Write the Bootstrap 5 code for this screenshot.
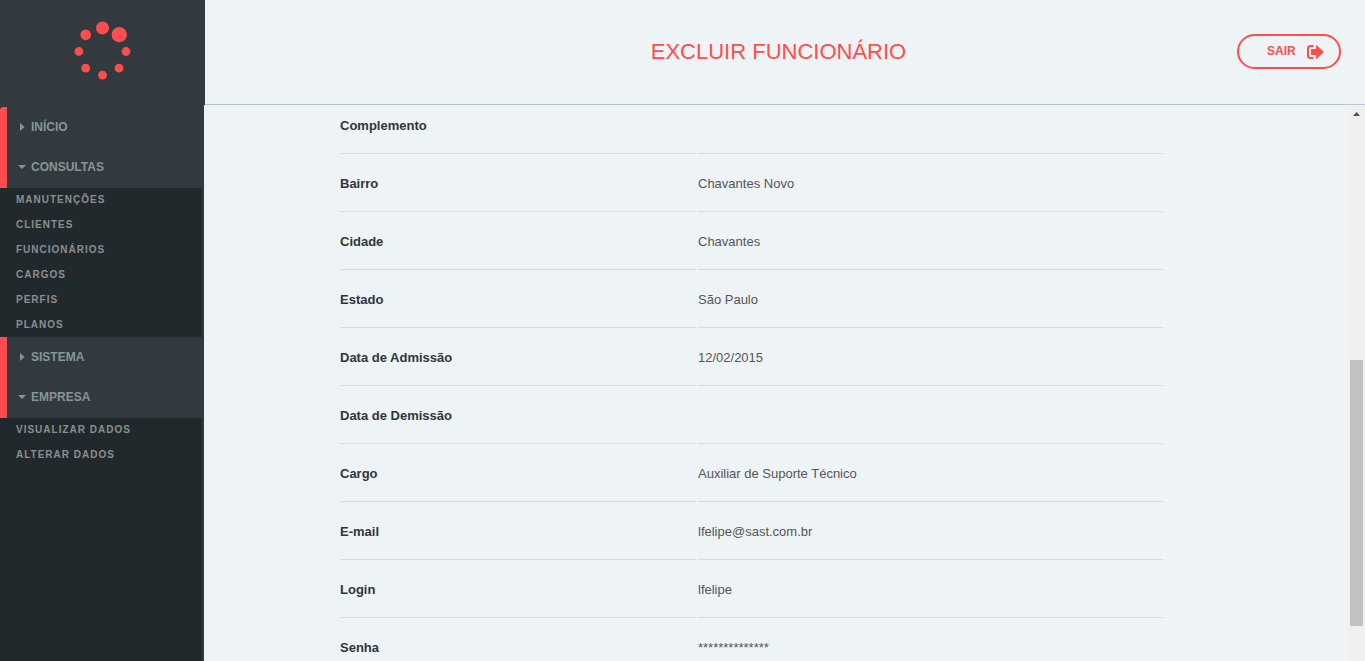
<!DOCTYPE html>
<html lang="pt-BR">
<head>
<meta charset="utf-8">
<meta name="viewport" content="width=device-width, initial-scale=1">
<title>Excluir Funcionário</title>
<link href="https://cdn.jsdelivr.net/npm/bootstrap@5.3.0/dist/css/bootstrap.min.css" rel="stylesheet">
<style>
  :root { --accent: #ff4d4d; --slate: #323a40; --ink: #22292c; --page: #eef3f6; }
  body { font-family: "Liberation Sans", Arial, sans-serif; font-size: 13px; background: var(--page); color: #555; }
  a { text-decoration: none; }

  /* top bar */
  .brand { width: 205px; height: 105px; padding-bottom: 2px; background: var(--slate); }
  .topbar { display: grid; grid-template-columns: 1fr auto 1fr; padding: 0 24px 1px 11px; border-bottom: 1px solid #b8c4d0; }
  .page-title { font-size: 22px; line-height: 27px; color: var(--accent); font-weight: 400; }
  .btn-exit { --bs-btn-color: var(--accent); --bs-btn-border-color: var(--accent); --bs-btn-hover-color: #fff; --bs-btn-hover-bg: var(--accent);
    --bs-btn-font-size: 12px; --bs-btn-font-weight: 700; --bs-btn-line-height: 19px; --bs-btn-border-width: 2px;
    --bs-btn-padding-y: 6px; --bs-btn-padding-x: 0; width: 104px; height: 35px; padding-left: 28px; gap: 11px; justify-self: end; }

  /* side menu */
  .side { width: 204px; background: var(--ink); border-top: 2px solid var(--slate); border-right: 2px solid var(--slate); }
  .menu-group { background: var(--slate); border-left: 7px solid var(--accent); padding-bottom: 1px; }
  .menu-group.first { border-top-left-radius: 3px; }
  .menu-group a { height: 40px; padding-left: 11px; gap: 5px; font-size: 12px; font-weight: 700; color: #869696; }
  .menu-group svg { fill: #968f8f; }
  .submenu { gap: 1px; }
  .submenu a { display: block; padding: 0 0 1px 16px; font-size: 10px; line-height: 23px; font-weight: 700; letter-spacing: 1px; color: #8a8f8f; }

  /* record sheet */
  .sheet { display: grid; grid-template-columns: 134fr 827fr 183fr; }
  .record { grid-column: 2; width: 100%; align-self: start; table-layout: fixed; border-collapse: separate; border-spacing: 2px 0; }
  .record th { width: 356px; color: #2e363b; font-weight: 700; }
  .record th, .record td { padding: 20px 0 18px; line-height: 19px; border-bottom: 1px solid #d6dce0; }
  .record tr:first-child > * { padding-top: 11px; }

  /* scroll track */
  .track { width: 17px; background: #f0f0f0; display: grid; grid-template-rows: 255fr 266fr 35fr; }
  .track svg { margin: 7px 0 0 5px; }
  .thumb { grid-row: 2; background: #c1c1c1; margin: 0 2px; }
</style>
<script src="https://cdn.jsdelivr.net/npm/bootstrap@5.3.0/dist/js/bootstrap.bundle.min.js"></script>
</head>
<body class="d-flex flex-column vh-100 overflow-hidden">
<header class="d-flex flex-shrink-0">
  <a href="#" class="brand d-flex align-items-center justify-content-center flex-shrink-0" aria-label="Início">
    <svg width="58" height="64" viewBox="74 20 58 64" fill="#ff4d4d" aria-hidden="true">
      <circle cx="102.5" cy="28" r="6.5"/><circle cx="119.2" cy="34.7" r="7.6"/><circle cx="126" cy="51.5" r="4.4"/><circle cx="119" cy="68.2" r="4.4"/>
      <circle cx="102.500" cy="75.2" r="4.4"/><circle cx="85.7" cy="68.2" r="4.4"/><circle cx="78.9" cy="51.5" r="4.4"/><circle cx="85.7" cy="34.8" r="5.4"/>
    </svg>
  </a>
  <div class="topbar flex-grow-1 align-items-center">
    <span></span>
    <h1 class="page-title m-0">EXCLUIR FUNCIONÁRIO</h1>
    <button type="button" class="btn btn-exit rounded-pill d-flex align-items-center">SAIR
      <svg width="17" height="14" viewBox="0 0 17 14" aria-hidden="true">
        <path d="M6.5 1H3.5Q1 1 1 3.5v7Q1 13 3.5 13h3" fill="none" stroke="currentColor" stroke-width="2"/>
        <path d="M4.500 4H9V.6q.2-.6.9-.1l6.300 5.800q.7.7 0 1.400l-6.300 5.800q-.7.5-.9-.1V10H4.500Q4 10 4 9.500V4.500Q4 4 4.500 4z" fill="currentColor"/>
      </svg>
    </button>
  </div>
</header>
<div class="d-flex flex-grow-1 overflow-hidden">
  <nav class="side flex-shrink-0" aria-label="Menu">
    <div class="menu-group first">
      <a href="#" class="d-flex align-items-center"><svg width="8" height="8" aria-hidden="true"><path d="M2 0l4.500 4L2 8z"/></svg>INÍCIO</a>
      <a href="#" class="d-flex align-items-center"><svg width="8" height="8" aria-hidden="true"><path d="M0 2h8L4 6z"/></svg>CONSULTAS</a>
    </div>
    <div class="submenu d-grid">
      <a href="#">MANUTENÇÕES</a>
      <a href="#">CLIENTES</a>
      <a href="#">FUNCIONÁRIOS</a>
      <a href="#">CARGOS</a>
      <a href="#">PERFIS</a>
      <a href="#">PLANOS</a>
    </div>
    <div class="menu-group">
      <a href="#" class="d-flex align-items-center"><svg width="8" height="8" aria-hidden="true"><path d="M2 0l4.500 4L2 8z"/></svg>SISTEMA</a>
      <a href="#" class="d-flex align-items-center"><svg width="8" height="8" aria-hidden="true"><path d="M0 2h8L4 6z"/></svg>EMPRESA</a>
    </div>
    <div class="submenu d-grid">
      <a href="#">VISUALIZAR DADOS</a>
      <a href="#">ALTERAR DADOS</a>
    </div>
  </nav>
  <main class="sheet flex-grow-1 overflow-hidden">
    <table class="record">
      <tbody>
        <tr><th scope="row">Complemento</th><td></td></tr>
        <tr><th scope="row">Bairro</th><td>Chavantes Novo</td></tr>
        <tr><th scope="row">Cidade</th><td>Chavantes</td></tr>
        <tr><th scope="row">Estado</th><td>São Paulo</td></tr>
        <tr><th scope="row">Data de Admissão</th><td>12/02/2015</td></tr>
        <tr><th scope="row">Data de Demissão</th><td></td></tr>
        <tr><th scope="row">Cargo</th><td>Auxiliar de Suporte Técnico</td></tr>
        <tr><th scope="row">E-mail</th><td>lfelipe@sast.com.br</td></tr>
        <tr><th scope="row">Login</th><td>lfelipe</td></tr>
        <tr><th scope="row">Senha</th><td>**************</td></tr>
      </tbody>
    </table>
  </main>
  <div class="track flex-shrink-0" aria-hidden="true">
    <svg width="7" height="4" fill="#505050"><path d="M0 4L3.500 0L7 4z"/></svg>
    <div class="thumb"></div>
  </div>
</div>
</body>
</html>
